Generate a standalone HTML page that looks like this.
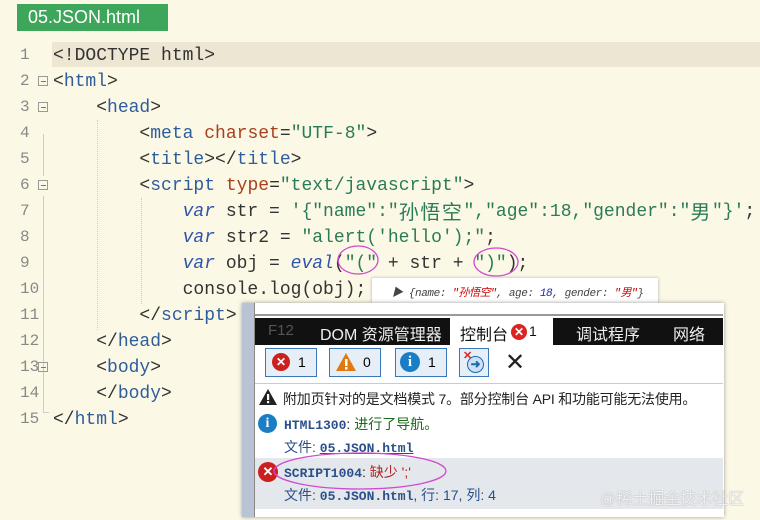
<!DOCTYPE html>
<html><head><meta charset="utf-8"><style>
body{margin:0;width:760px;height:520px;background:#fcf8e6;position:relative;overflow:hidden;font-family:"Liberation Mono","Noto Sans CJK SC",monospace}
.tab{position:absolute;left:17px;top:4px;width:151px;height:27px;background:#3ea65a;color:#fff;font:18px "Liberation Sans",sans-serif;line-height:27px;padding-left:11px;box-sizing:border-box}
.ln{position:absolute;left:20px;width:20px;color:#888;font-size:16px}
.fb{position:absolute;left:38px;width:8px;height:8px;border:1px solid #999;font-size:0}
.fb:after{content:"";position:absolute;left:2px;top:4px;width:5px;height:1px;background:#777}
.c{position:absolute;left:53px;font-size:18px;white-space:pre;color:#333;height:26px;line-height:26px}
.t{color:#2e5d9c}.a{color:#a8401c}.s{color:#2a7b58}.k{color:#2f56a8;font-style:italic}
.cj{font-family:"Noto Sans CJK SC",sans-serif;font-size:20px;line-height:20px;letter-spacing:1.6px;display:inline-block;vertical-align:top;margin-top:2px}
.p{position:absolute;font-family:"Liberation Sans","Noto Sans CJK SC",sans-serif}
.btn{position:absolute;top:348px;height:29px;border:1px solid #3a77b8;background:#e6eef7;box-sizing:border-box}
.ic{position:absolute;border-radius:50%;color:#fff;font:bold 12px "Liberation Sans",sans-serif;text-align:center}
</style></head><body>
<div class="tab">05.JSON.html</div>
<div style="position:absolute;left:52px;top:42px;width:708px;height:25px;background:#ece6d3"></div>
<div style="position:absolute;left:43px;top:134px;width:1px;height:42px;background:#ccc"></div>
<div style="position:absolute;left:43px;top:196px;width:1px;height:216px;background:#ccc"></div>
<div style="position:absolute;left:43px;top:412px;width:6px;height:1px;background:#ccc"></div>
<div style="position:absolute;left:97px;top:120px;border-left:1px dotted #ccc;height:210px"></div>
<div style="position:absolute;left:141px;top:198px;border-left:1px dotted #ccc;height:106px"></div>

<div class="ln" style="top:46px">1</div><div class="c" style="top:43px">&lt;!DOCTYPE html&gt;</div>
<div class="ln" style="top:72px">2</div><div class="fb" style="top:76px"></div><div class="c" style="top:69px">&lt;<span class="t">html</span>&gt;</div>
<div class="ln" style="top:98px">3</div><div class="fb" style="top:102px"></div><div class="c" style="top:95px">    &lt;<span class="t">head</span>&gt;</div>
<div class="ln" style="top:124px">4</div><div class="c" style="top:121px">        &lt;<span class="t">meta</span> <span class="a">charset</span>=<span class="s">"UTF-8"</span>&gt;</div>
<div class="ln" style="top:150px">5</div><div class="c" style="top:147px">        &lt;<span class="t">title</span>&gt;&lt;/<span class="t">title</span>&gt;</div>
<div class="ln" style="top:176px">6</div><div class="fb" style="top:180px"></div><div class="c" style="top:173px">        &lt;<span class="t">script</span> <span class="a">type</span>=<span class="s">"text/javascript"</span>&gt;</div>
<div class="ln" style="top:202px">7</div><div class="c" style="top:199px">            <span class="k">var</span> str = <span class="s">'{"name":"<span class="cj">孙悟空</span>","age":18,"gender":"<span class="cj">男</span>"}'</span>;</div>
<div class="ln" style="top:228px">8</div><div class="c" style="top:225px">            <span class="k">var</span> str2 = <span class="s">"alert('hello');"</span>;</div>
<div class="ln" style="top:254px">9</div><div class="c" style="top:251px">            <span class="k">var</span> obj = <span class="k">eval</span>(<span class="s">"("</span> + str + <span class="s">")"</span>);</div>
<div class="ln" style="top:280px">10</div><div class="c" style="top:277px">            console.log(obj);</div>
<div class="ln" style="top:306px">11</div><div class="c" style="top:303px">        &lt;/<span class="t">script</span>&gt;</div>
<div class="ln" style="top:332px">12</div><div class="c" style="top:329px">    &lt;/<span class="t">head</span>&gt;</div>
<div class="ln" style="top:358px">13</div><div class="fb" style="top:362px"></div><div class="c" style="top:355px">    &lt;<span class="t">body</span>&gt;</div>
<div class="ln" style="top:384px">14</div><div class="c" style="top:381px">    &lt;/<span class="t">body</span>&gt;</div>
<div class="ln" style="top:410px">15</div><div class="c" style="top:407px">&lt;/<span class="t">html</span>&gt;</div>

<svg style="position:absolute;left:0;top:0" width="760" height="520">
<ellipse cx="358" cy="260" rx="20" ry="14" fill="none" stroke="#d04ad0" stroke-width="1.3"/>
<ellipse cx="496" cy="262" rx="22" ry="14" fill="none" stroke="#d04ad0" stroke-width="1.3"/>
</svg>

<div style="position:absolute;left:372px;top:277px;width:286px;height:26px;background:#fff;border-top:1px solid #ddd;box-shadow:0 1px 3px #aaa"></div>
<div class="p" style="left:392px;top:284px;font:italic 11px 'Liberation Mono','Noto Sans CJK SC',monospace;color:#444;letter-spacing:-.4px">▶ {name: <span style="color:#c00">"孙悟空"</span>, age: <span style="color:#22a">18</span>, gender: <span style="color:#c00">"男"</span>}</div>

<div style="position:absolute;left:242px;top:303px;width:482px;height:214px;background:#fff;box-shadow:0 0 4px #999"></div>
<div style="position:absolute;left:242px;top:303px;width:12px;height:214px;background:#b8c4d4;border-right:1px solid #888"></div>
<div style="position:absolute;left:255px;top:314px;width:468px;height:2px;background:#999"></div>
<div style="position:absolute;left:255px;top:318px;width:468px;height:27px;background:#111"></div>
<div style="position:absolute;left:450px;top:318px;width:103px;height:28px;background:#fff"></div>
<div class="p" style="left:268px;top:322px;font-size:15px;color:#555">F12</div>
<div class="p" style="left:320px;top:321px;font-size:16px;color:#eee">DOM 资源管理器</div>
<div class="p" style="left:460px;top:321px;font-size:16px;color:#111">控制台</div>
<div class="ic" style="left:511px;top:324px;width:16px;height:16px;line-height:16px;background:#d22">✕</div>
<div class="p" style="left:529px;top:323px;font-size:14px;color:#111">1</div>
<div class="p" style="left:576px;top:321px;font-size:16px;color:#eee">调试程序</div>
<div class="p" style="left:673px;top:321px;font-size:16px;color:#eee">网络</div>

<div class="btn" style="left:265px;width:52px"></div>
<div class="ic" style="left:272px;top:353px;width:18px;height:18px;line-height:18px;background:#cc2020">✕</div>
<div class="p" style="left:298px;top:354px;font-size:14px">1</div>
<div class="btn" style="left:329px;width:52px"></div>
<svg style="position:absolute;left:335px;top:352px" width="22" height="20"><path d="M11 1 L21 19 L1 19Z" fill="#e07a10"/><rect x="10" y="7" width="2.5" height="7" fill="#fff"/><rect x="10" y="15" width="2.5" height="2.5" fill="#fff"/></svg>
<div class="p" style="left:363px;top:354px;font-size:14px">0</div>
<div class="btn" style="left:395px;width:52px"></div>
<div class="ic" style="left:400px;top:352px;width:20px;height:20px;line-height:20px;background:#1a7ec4;font-size:15px;font-family:'Liberation Serif'">i</div>
<div class="p" style="left:428px;top:354px;font-size:14px">1</div>
<div class="btn" style="left:459px;width:30px"></div>
<div class="ic" style="left:467px;top:356px;width:15px;height:15px;border:1px solid #1a6ab0;background:#cfe2f5;color:#1a6ab0;line-height:15px">➜</div>
<div class="p" style="left:463px;top:349px;color:#d22;font-size:11px;font-weight:bold">✕</div>
<div class="p" style="left:505px;top:348px;font-size:24px;color:#222">✕</div>
<div style="position:absolute;left:255px;top:383px;width:468px;height:1px;background:#ccc"></div>

<svg style="position:absolute;left:258px;top:388px" width="20" height="18"><path d="M10 1 L19 17 L1 17Z" fill="#222"/><rect x="9" y="6" width="2.2" height="6" fill="#fff"/><rect x="9" y="13" width="2.2" height="2.2" fill="#fff"/></svg>
<div class="p" style="left:283px;top:389px;font-size:14px;color:#222;letter-spacing:-.2px">附加页针对的是文档模式 7。部分控制台 API 和功能可能无法使用。</div>
<div class="ic" style="left:258px;top:414px;width:19px;height:19px;line-height:19px;background:#1a7ec4;font-size:14px;font-family:'Liberation Serif'">i</div>
<div class="p" style="left:284px;top:414px;font-size:14px;color:#222"><span style="font-family:'Liberation Mono';color:#2a4f8a;font-weight:bold;font-size:13px">HTML1300</span>: <span style="color:#1a6a1a">进行了导航。</span></div>
<div class="p" style="left:284px;top:437px;font-size:14px;color:#2a4f8a">文件: <span style="font-family:'Liberation Mono';font-size:13px;font-weight:bold;text-decoration:underline">05.JSON.html</span></div>
<div style="position:absolute;left:255px;top:458px;width:468px;height:51px;background:#e4e8ec"></div>
<div class="ic" style="left:258px;top:462px;width:20px;height:20px;line-height:20px;background:#cc2020;font-size:13px">✕</div>
<div class="p" style="left:284px;top:462px;font-size:14px;color:#222"><span style="font-family:'Liberation Mono';color:#2a4f8a;font-weight:bold;font-size:13px">SCRIPT1004</span>: <span style="color:#b02020">缺少 ';'</span></div>
<div class="p" style="left:284px;top:485px;font-size:14px;color:#2a4f8a">文件: <span style="font-family:'Liberation Mono';font-size:13px;font-weight:bold">05.JSON.html</span>, 行: 17, 列: 4</div>
<svg style="position:absolute;left:0;top:0" width="760" height="520"><ellipse cx="360" cy="471" rx="86" ry="18" fill="none" stroke="#d04ad0" stroke-width="1.3"/></svg>
<div class="p" style="left:600px;top:485px;font-size:16px;color:rgba(255,255,255,.85);text-shadow:0 0 1px #888">@稀土掘金技术社区</div>
</body></html>
